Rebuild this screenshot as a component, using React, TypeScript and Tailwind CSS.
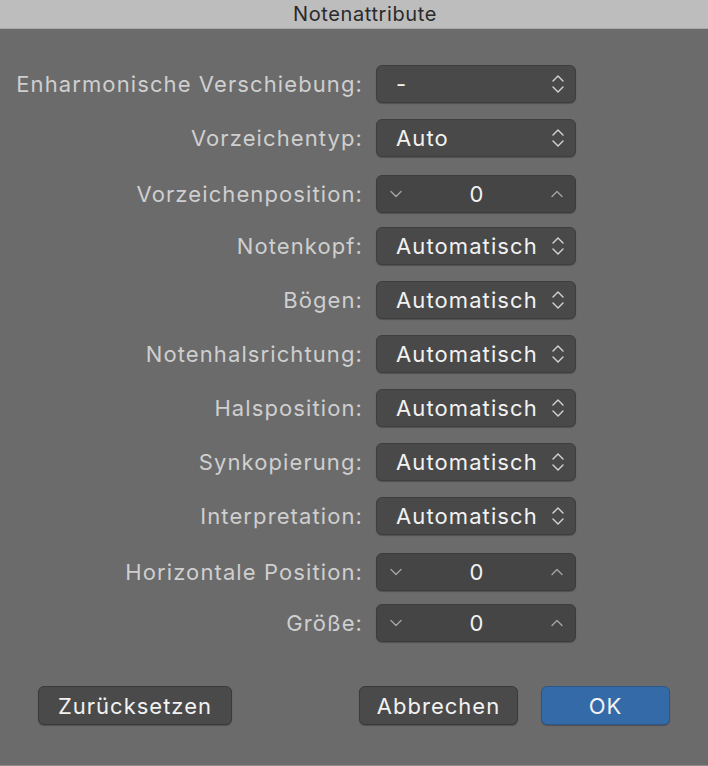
import React from "react";

const font = { fontFamily: "Inter, 'Liberation Sans', sans-serif" };

function UpDown() {
  return (
    <svg width="14" height="22" viewBox="0 0 14 22" fill="none" stroke="#d6d6d6" strokeWidth="1.4" strokeLinecap="round" strokeLinejoin="round">
      <path d="M2 8 L7 3 L12 8" />
      <path d="M2 14 L7 19 L12 14" />
    </svg>
  );
}

function Chevron({ up }: { up?: boolean }) {
  return (
    <svg width="14" height="8" viewBox="0 0 14 8" fill="none" stroke="#a4a4a4" strokeWidth="1.4" strokeLinecap="round" strokeLinejoin="round">
      {up ? <path d="M2 6.5 L7 1.5 L12 6.5" /> : <path d="M2 1.5 L7 6.5 L12 1.5" />}
    </svg>
  );
}

function Popup({ value }: { value: string }) {
  return (
    <div className="w-[200px] h-[38px] rounded-[6px] bg-[#494949] border border-[#3e3e3e] shadow-[0_1px_1px_rgba(0,0,0,0.25)] flex items-center pl-[19px] pr-[10px] justify-between">
      <span className="text-[22px] tracking-[1.1px] text-[#f2f2f2] leading-none">{value}</span>
      <UpDown />
    </div>
  );
}

function Stepper() {
  return (
    <div className="w-[200px] h-[38px] rounded-[6px] bg-[#454545] border border-[#3c3c3c] shadow-[0_1px_1px_rgba(0,0,0,0.25)] flex items-center pl-[12px] pr-[11px] justify-between">
      <Chevron />
      <span className="text-[22px] text-[#f2f2f2] leading-none">0</span>
      <Chevron up />
    </div>
  );
}

function Row({ label, children, className = "" }: { label: string; children: React.ReactNode; className?: string }) {
  return (
    <div className={"flex items-center " + className}>
      <div className="w-[363px] -mr-[1px] text-right text-[22px] tracking-[1.1px] text-[#cfcfcf] leading-none whitespace-nowrap">{label}</div>
      <div className="ml-[14px]">{children}</div>
    </div>
  );
}

export default function App() {
  const autos = ["Notenkopf:", "Bögen:", "Notenhalsrichtung:", "Halsposition:", "Synkopierung:", "Interpretation:"];
  const btn = "h-[39px] rounded-[6px] border shadow-[0_1px_1px_rgba(0,0,0,0.25)] text-[22px] tracking-[1px] text-[#f2f2f2] leading-none";
  return (
    <div className="w-[708px] h-[766px] bg-[#6b6b6b] border-b border-[#8c8c8c] flex flex-col" style={font}>
      <div className="h-[29px] bg-[#bdbdbd] border-b border-[#a8a8a8] flex items-center justify-center pl-[22px] text-[20px] tracking-[0.6px] text-[#2a2a2a] leading-none">
        Notenattribute
      </div>
      <div className="flex flex-col pt-[36px]">
        <Row label="Enharmonische Verschiebung:">
          <Popup value="-" />
        </Row>
        <Row label="Vorzeichentyp:" className="mt-[16px]">
          <Popup value="Auto" />
        </Row>
        <Row label="Vorzeichenposition:" className="mt-[18px]">
          <Stepper />
        </Row>
        <div className="flex flex-col gap-[16px] mt-[14px]">
          {autos.map((l) => (
            <Row key={l} label={l}>
              <Popup value="Automatisch" />
            </Row>
          ))}
        </div>
      </div>
      <Row label="Horizontale Position:" className="mt-[18px]">
        <Stepper />
      </Row>
      <Row label="Größe:" className="mt-[13px]">
        <Stepper />
      </Row>
      <div className="flex items-center mt-[44px] px-[38px]">
        <button className={btn + " w-[194px] bg-[#4a4a4a] border-[#3a3a3a]"}>Zurücksetzen</button>
        <button className={btn + " ml-[127px] w-[159px] bg-[#4a4a4a] border-[#3a3a3a]"}>Abbrechen</button>
        <button className={btn + " ml-[23px] w-[129px] bg-[#356aa8] border-[#2c5687]"}>OK</button>
      </div>
    </div>
  );
}
